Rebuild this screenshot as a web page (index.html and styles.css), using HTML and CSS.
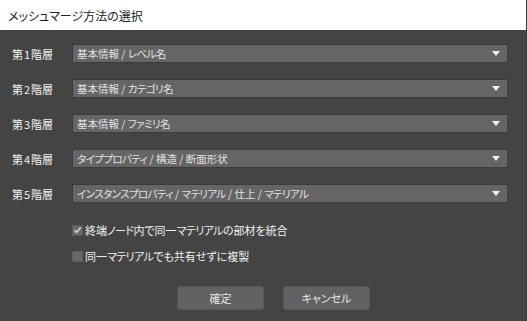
FILE: index.html
```html
<!DOCTYPE html>
<html lang="ja">
<head>
    <meta charset="UTF-8">
    <title>メッシュマージ方法の選択</title>
    <link rel="stylesheet" href="styles.css">
</head>
<body>
    <div class="dialog">
        <div class="title-bar">メッシュマージ方法の選択</div>
        <div class="content">
            <div class="levels">
                <div class="level-row">
                    <span class="level-label">第<span class="num">1</span>階層</span>
                    <div class="select"><span>基本情報 / <span class="kana">レベル</span>名</span><i class="arrow"></i></div>
                </div>
                <div class="level-row">
                    <span class="level-label">第<span class="num">2</span>階層</span>
                    <div class="select"><span>基本情報 / <span class="kana">カテゴリ</span>名</span><i class="arrow"></i></div>
                </div>
                <div class="level-row">
                    <span class="level-label">第<span class="num">3</span>階層</span>
                    <div class="select"><span>基本情報 / <span class="kana">ファミリ</span>名</span><i class="arrow"></i></div>
                </div>
                <div class="level-row">
                    <span class="level-label">第<span class="num">4</span>階層</span>
                    <div class="select"><span><span class="kana">タイププロパティ</span> / 構造 / 断面形状</span><i class="arrow"></i></div>
                </div>
                <div class="level-row">
                    <span class="level-label">第<span class="num">5</span>階層</span>
                    <div class="select"><span><span class="kana">インスタンスプロパティ</span> / <span class="kana">マテリアル</span> / 仕上 / <span class="kana">マテリアル</span></span><i class="arrow"></i></div>
                </div>
            </div>

            <div class="options">
                <label class="check">
                    <span class="box checked">
                        <svg width="10" height="10" viewBox="0 0 10 10"><path d="M1.5 5.2 L4 7.6 L8.6 2.2" fill="none" stroke="#d8d8d8" stroke-width="1.6"/></svg>
                    </span>
                    <span>終端<span class="kana">ノード</span>内で同一<span class="kana">マテリアル</span>の部材を統合</span>
                </label>
                <label class="check">
                    <span class="box"></span>
                    <span>同一<span class="kana">マテリアル</span>でも共有せずに複製</span>
                </label>
            </div>

            <div class="buttons">
                <button>確定</button>
                <button>キャンセル</button>
            </div>
        </div>
    </div>
</body>
</html>
```

FILE: styles.css
```css
* {
    font-family: "Noto Sans CJK JP", "Noto Sans", sans-serif;
    font-feature-settings: "palt";
    box-sizing: border-box;
}
body {
    margin: 0;
    width: 527px;
    height: 321px;
    background: #444444;
    overflow: hidden;
}
.dialog {
    height: 321px;
    border-right: 1px solid #3a3a3a;
    display: flex;
    flex-direction: column;
}
.title-bar {
    height: 30px;
    background: #ffffff;
    color: #222;
    font-size: 12px;
    padding-left: 8px;
    display: flex;
    align-items: center;
}
.content {
    flex: 1;
    padding: 14px 0 0 12px;
}
.kana {
    letter-spacing: -0.6px;
}
.levels {
    display: flex;
    flex-direction: column;
    gap: 16px;
}
.level-row {
    display: flex;
    align-items: center;
    height: 19px;
}
.level-label {
    width: 60px;
    color: #f2f2f2;
    font-size: 11px;
}
.level-label .num {
    padding: 0 1px;
}
.select {
    width: 436px;
    height: 19px;
    background: #656565;
    border: 1px solid #3b3b3b;
    border-right-color: #404040;
    color: #e2e2e2;
    font-size: 10.5px;
    display: flex;
    align-items: center;
    justify-content: space-between;
    padding: 0 7px 0 4px;
}
.arrow {
    width: 0;
    height: 0;
    border-left: 4px solid transparent;
    border-right: 4px solid transparent;
    border-top: 5px solid #f0f0f0;
}
.options {
    margin: 19px 0 0 60px;
    display: flex;
    flex-direction: column;
    gap: 10px;
}
.check {
    display: flex;
    align-items: center;
    gap: 2px;
    color: #f0f0f0;
    font-size: 11px;
    height: 16px;
}
.box {
    width: 11px;
    height: 11px;
    background: #696969;
    border: 1px solid #5a5a5a;
    display: flex;
    align-items: center;
    justify-content: center;
}
.buttons {
    display: flex;
    gap: 19px;
    margin: 22px 0 0 165px;
}
button {
    width: 87px;
    height: 24px;
    background: #626262;
    border: 1px solid #575757;
    border-radius: 3px;
    color: #e6e6e6;
    font-size: 11px;
    padding: 0;
}
```
